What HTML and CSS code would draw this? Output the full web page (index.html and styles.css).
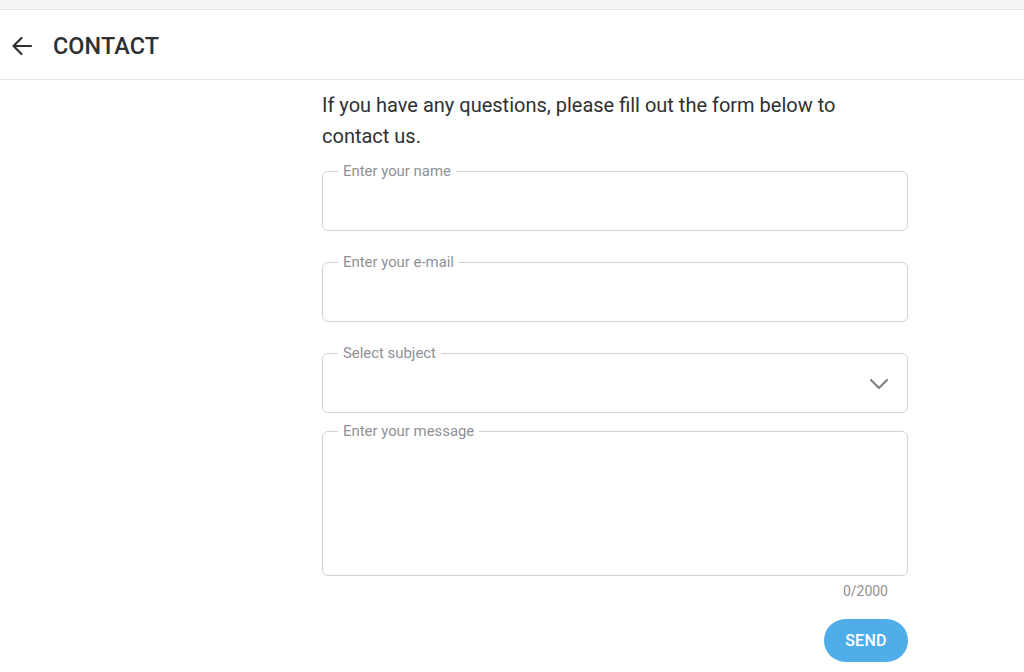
FILE: index.html
```html
<!DOCTYPE html>
<html lang="en">
<head>
<meta charset="utf-8">
<title>Contact</title>
<link rel="stylesheet" href="styles.css">
</head>
<body>
<div class="topstrip"></div>
<header class="header">
  <button class="back" aria-label="Back">
    <svg width="24" height="24" viewBox="0 0 24 24"><path d="M21 12H3.5M11.5 4L3.5 12L11.5 20" fill="none" stroke="#2f3033" stroke-width="2.2" stroke-linecap="round" stroke-linejoin="round"/></svg>
  </button>
  <h1 class="title">CONTACT</h1>
</header>
<main class="main">
  <p class="intro">If you have any questions, please fill out the form below to contact us.</p>
  <form class="form">
    <fieldset class="field">
      <legend class="label">Enter your name</legend>
      <div class="control"></div>
    </fieldset>
    <fieldset class="field">
      <legend class="label">Enter your e-mail</legend>
      <div class="control"></div>
    </fieldset>
    <fieldset class="field field-select">
      <legend class="label">Select subject</legend>
      <div class="control select">
        <svg class="chevron" width="20" height="12" viewBox="0 0 20 12"><path d="M2 2L10 10L18 2" fill="none" stroke="#7a7c80" stroke-width="2" stroke-linecap="round" stroke-linejoin="round"/></svg>
      </div>
    </fieldset>
    <fieldset class="field field-area">
      <legend class="label">Enter your message</legend>
      <div class="control area"></div>
    </fieldset>
    <div class="counter">0/2000</div>
    <div class="actions"><button type="button" class="send">SEND</button></div>
  </form>
</main>
</body>
</html>
```
FILE: styles.css
```css
* { box-sizing: border-box; }
html, body { margin: 0; padding: 0; background: #fff; }
body { font-family: Roboto, "Noto Sans", "Liberation Sans", sans-serif; color: #2f3033; }
.topstrip { height: 10px; background: #f4f5f7; border-bottom: 1px solid #e3e5e8; }
.header { height: 70px; display: flex; align-items: center; padding-left: 10px; padding-top: 2px; border-bottom: 1px solid #e3e5e8; }
.back { background: none; border: 0; padding: 0; width: 24px; height: 24px; display: flex; align-items: center; justify-content: center; cursor: pointer; }
.back svg { display: block; }
.title { margin: 0 0 0 19px; font-size: 23.4px; font-weight: 500; letter-spacing: 0.1px; color: #2f3033; }
.main { width: 586px; margin-left: 322px; }
.intro { margin: 10px 0 11px; font-size: 20px; line-height: 31px; color: #2f3033; padding-right: 40px; }
.form { display: flex; flex-direction: column; }
.field { margin: 0 0 23px; padding: 0; border: 1px solid #cfd1d5; border-radius: 6px; min-width: 0; }
.field-select { margin-bottom: 10px; }
.field-area { margin-bottom: 0; }
.label { margin-left: 15px; padding: 0 5px; font-size: 14.9px; line-height: 16px; color: #8e9196; }
.control { height: 51px; position: relative; }
.select { display: flex; align-items: center; justify-content: flex-end; padding-right: 18px; padding-bottom: 6px; }
.chevron { display: block; }
.area { height: 136px; }
.counter { text-align: right; padding-right: 20px; margin-top: 7px; font-size: 14px; line-height: 16px; color: #8e9196; }
.actions { display: flex; justify-content: flex-end; margin-top: 20px; }
.send { width: 84px; height: 43px; border: 0; border-radius: 22px; background: #4faeea; color: #fff; font-family: Roboto, "Noto Sans", sans-serif; font-size: 16px; font-weight: 500; letter-spacing: 0.3px; cursor: pointer; }
```
